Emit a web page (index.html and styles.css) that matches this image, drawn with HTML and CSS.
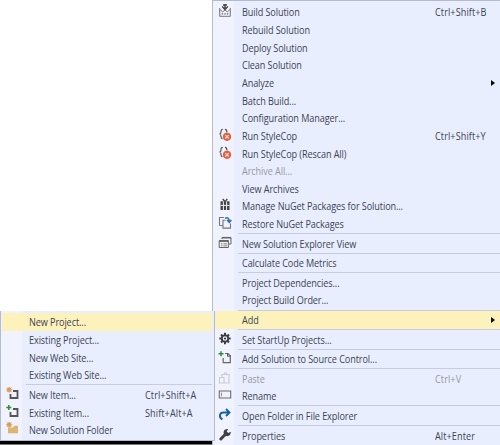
FILE: index.html
```
<!DOCTYPE html>
<html lang="en">
<head>
<meta charset="utf-8">
<title>Solution menu</title>
<link rel="stylesheet" href="styles.css">
</head>
<body>
<svg class="defs" width="0" height="0">
  <defs>
    <symbol id="cop" viewBox="0 0 14 14"><path d="M4.8 1.3Q2.8 1.3 3 4Q3 5.8 1.5 6Q3 6.2 3 8.5Q3 10.5 4.4 10.8M7 1.3Q9 1.3 9 4.5" fill="none" stroke="#555" stroke-width="1.2"/><circle cx="9" cy="8.8" r="4.1" fill="#e6603f"/><path d="M7.3 7.1l3.4 3.4m0-3.4l-3.4 3.4" stroke="#fbe3dc" stroke-width="1.1"/></symbol>
    <symbol id="star" viewBox="0 0 6 6"><circle cx="3" cy="3" r="2" fill="#d49340"/><path d="M3 0v6M0 3h6M.8 .8l4.4 4.4M5.2 .8L.8 5.2" stroke="#d9a35a" stroke-width=".8"/></symbol>
  </defs>
</svg>
<main class="screen">
  <nav class="menu">
    <div class="row"><i class="ico"><svg viewBox="0 0 14 14"><path d="M7 0v5M4.2 2.6L7 5.4l2.8-2.8M5 1l4 0" fill="none" stroke="#444" stroke-width="1.4"/><path d="M1.7 4v8.3h10.6V4M2 5.5l2.5 2.3L7 6.2l2.5 1.6L12 5.5" fill="none" stroke="#777" stroke-width="1"/><path d="M3.7 9.8h1.4M6.3 9.8h1.4M8.9 9.8h1.4" stroke="#666" stroke-width="1.2"/></svg></i><span class="label">Build Solution</span><span class="key">Ctrl+Shift+B</span></div>
    <div class="row"><i class="ico"></i><span class="label">Rebuild Solution</span></div>
    <div class="row"><i class="ico"></i><span class="label">Deploy Solution</span></div>
    <div class="row"><i class="ico"></i><span class="label">Clean Solution</span></div>
    <div class="row"><i class="ico"></i><span class="label">Analyze</span><b class="arrow"></b></div>
    <div class="row"><i class="ico"></i><span class="label">Batch Build...</span></div>
    <div class="row"><i class="ico"></i><span class="label">Configuration Manager...</span></div>
    <div class="row"><i class="ico"><svg><use href="#cop"/></svg></i><span class="label">Run StyleCop</span><span class="key">Ctrl+Shift+Y</span></div>
    <div class="row"><i class="ico"><svg><use href="#cop"/></svg></i><span class="label">Run StyleCop (Rescan All)</span></div>
    <div class="row off"><i class="ico"></i><span class="label">Archive All...</span></div>
    <div class="row"><i class="ico"></i><span class="label">View Archives</span></div>
    <div class="row"><i class="ico"><svg viewBox="0 0 14 14"><path d="M2.5 3.3h9v8.7h-9z" fill="#444"/><path d="M5.4 3.3v8.7M8.6 3.3v8.7M2.5 7.4h9" stroke="#edf0fb" stroke-width="1"/><path d="M7 3.6L4.7 1M7 3.6L9.3 1" stroke="#444" stroke-width="1.4"/></svg></i><span class="label">Manage NuGet Packages for Solution...</span></div>
    <div class="row"><i class="ico"><svg viewBox="0 0 14 14"><path d="M1.5 9.5V1.5h4.5M1.5 9.5h3M5 3.8v8.3h7.5V7.5M5 4.2h2.5" fill="none" stroke="#777" stroke-width="1.1"/><path d="M7 2.4q3.8-1.8 4.3 2.4M9 4l2.3 2.3L13.4 4" fill="none" stroke="#2b70ad" stroke-width="1.5"/></svg></i><span class="label">Restore NuGet Packages</span></div>
    <hr>
    <div class="row"><i class="ico"><svg viewBox="0 0 14 14"><path d="M4 3V1.5h9V8h-2" fill="none" stroke="#666"/><path d="M4 1.7h9" stroke="#666" stroke-width="1.6"/><path d="M1.2 4.5h9.2v7H1.2z" fill="#eee" stroke="#666"/><path d="M1.2 5.2h9.2" stroke="#666" stroke-width="1.5"/><path d="M3 7.8h1.5M5.5 7.8H9M3 9.8h1.5M5.5 9.8H9" stroke="#888"/></svg></i><span class="label">New Solution Explorer View</span></div>
    <hr>
    <div class="row"><i class="ico"></i><span class="label">Calculate Code Metrics</span></div>
    <hr>
    <div class="row"><i class="ico"></i><span class="label">Project Dependencies...</span></div>
    <div class="row"><i class="ico"></i><span class="label">Project Build Order...</span></div>
    <hr>
    <div class="row hot"><i class="ico"></i><span class="label">Add</span><b class="arrow"></b></div>
    <hr>
    <div class="row"><i class="ico"><svg viewBox="0 0 14 14"><path d="M7 .8v11.4M1.3 6.5h11.4M3 2.5l8 8M11 2.5l-8 8" stroke="#3c3c42" stroke-width="2"/><circle cx="7" cy="6.5" r="3.2" fill="#eef1fc" stroke="#3c3c42" stroke-width="1.8"/><circle cx="7" cy="6.5" r="1.1" fill="#3c3c42"/></svg></i><span class="label">Set StartUp Projects...</span></div>
    <hr>
    <div class="row"><i class="ico"><svg viewBox="0 0 14 14"><path d="M3 .3v5M.5 2.8h5" stroke="#2d9130" stroke-width="1.5"/><path d="M7 2.5h3l2.3 2.3V11.7H5.2V7" fill="none" stroke="#666" stroke-width="1.2"/><path d="M9.5 2v3.2h3" fill="none" stroke="#555"/></svg></i><span class="label">Add Solution to Source Control...</span></div>
    <hr>
    <div class="row off"><i class="ico"><svg viewBox="0 0 14 14"><path d="M4 6V3.5h7V12H6M6 3.5q1.5-4 3 0M1.5 6.5H6V12H1.5z" fill="none" stroke="#c9cbd5" stroke-width="1.1"/></svg></i><span class="label">Paste</span><span class="key">Ctrl+V</span></div>
    <div class="row"><i class="ico"><svg viewBox="0 0 14 14"><path d="M1.3 3h11.4v7H1.3z" fill="none" stroke="#6d6a76" stroke-width="1.1"/><path d="M3.5 4.7v3.6" stroke="#777" stroke-width=".8"/></svg></i><span class="label">Rename</span></div>
    <hr>
    <div class="row"><i class="ico"><svg viewBox="0 0 14 14"><path d="M4.4 11.3C.4 9.3 1.5 4.5 5.5 4.5H11M8 1l3.5 3.5L8 8" fill="none" stroke="#1762a5" stroke-width="1.9"/></svg></i><span class="label">Open Folder in File Explorer</span></div>
    <hr>
    <div class="row"><i class="ico"><svg viewBox="0 0 14 14"><path d="M2.8 11L7.7 6" stroke="#404044" stroke-width="3" stroke-linecap="round"/><path d="M10.2 1.1A3.6 3.6 0 1 0 12.7 3.8L10.3 5 8.7 3.5z" fill="#404044"/></svg></i><span class="label">Properties</span><span class="key">Alt+Enter</span></div>
  </nav>
  <nav class="menu sub">
    <div class="row hot"><i class="ico"></i><span class="label">New Project...</span></div>
    <div class="row"><i class="ico"></i><span class="label">Existing Project...</span></div>
    <div class="row"><i class="ico"></i><span class="label">New Web Site...</span></div>
    <div class="row"><i class="ico"></i><span class="label">Existing Web Site...</span></div>
    <hr>
    <div class="row"><i class="ico"><svg viewBox="0 0 14 14"><path d="M7 4h4.5v7h-7V7" fill="none" stroke="#555" stroke-width="1.8"/><use href="#star" x="0" y="-.6" width="6.5" height="6.5"/></svg></i><span class="label">New Item...</span><span class="key">Ctrl+Shift+A</span></div>
    <div class="row"><i class="ico"><svg viewBox="0 0 14 14"><path d="M7 4h4.5v7h-7V7" fill="none" stroke="#555" stroke-width="1.8"/><path d="M2.8 0v5M.3 2.5h5" stroke="#2d9130" stroke-width="1.5"/></svg></i><span class="label">Existing Item...</span><span class="key">Shift+Alt+A</span></div>
    <div class="row"><i class="ico"><svg viewBox="0 0 14 14"><path d="M2 5.5h5l1.3-1.8H12v7.6H2z" fill="#deb473"/><use href="#star" x="0" y="-.6" width="6.5" height="6.5"/></svg></i><span class="label">New Solution Folder</span></div>
  </nav>
  <div class="strip"></div>
</main>
</body>
</html>
```
FILE: styles.css
```
* { box-sizing: border-box; }
body { margin: 0; background: #fff; overflow: hidden; }
.defs { position: absolute; }
.screen {
  position: relative;
  width: 500px;
  height: 445px;
  overflow: hidden;
  font: 10.2px/18.6px "Open Sans", "Noto Sans", sans-serif;
  letter-spacing: -0.1px;
  color: #3b4456;
}
.menu {
  margin-left: 212px;
  width: 288px;
  height: 445px;
  padding-top: 2.4px;
  border-top: 1px solid #b3bccf;
  border-left: 1px solid #b3bccf;
  background: linear-gradient(90deg, #f0f2fd 21px, #e9eefe 21px);
}
.row {
  display: grid;
  grid-template-columns: 29px 192.5px 1fr;
  height: 17.65px;
  white-space: nowrap;
}
.label, .key { transform: scaleX(0.893); transform-origin: 0 0; }
.label { grid-column: 2; }
.key { grid-column: 3; letter-spacing: 0.1px; }
.ico { grid-column: 1; padding: 1px 0 0 5px; height: 17px; line-height: 0; }
.ico svg { width: 14px; height: 14px; }
.off { color: #9799a1; }
.hot { background: #fdf2bb; }
.arrow {
  grid-column: 3;
  align-self: center;
  margin-left: 56px;
  border-left: 4px solid #080808;
  border-top: 3px solid transparent;
  border-bottom: 3px solid transparent;
  width: 0;
}
hr {
  height: 1px;
  margin: 0.45px 0 0.5px 25px;
  border: 0;
  background: #c8cddd;
}
.sub {
  position: absolute;
  left: 0;
  top: 311px;
  width: 215px;
  height: 130px;
  margin: 0;
  border: solid #b3bccf;
  border-width: 0 1px 1px;
  background: linear-gradient(90deg, #f0f2fd 21px, #e9eefe 21px);
}
.sub .row { grid-template-columns: 28px 116px 1fr; }
.sub .hot { margin: 0 2px 0 1px; grid-template-columns: 27px 1fr; }
.sub hr { margin-right: 2px; }
.strip {
  position: absolute;
  left: 0;
  top: 441px;
  width: 212px;
  height: 4px;
  background: #000;
  border-bottom: 1px solid #777;
}
```
